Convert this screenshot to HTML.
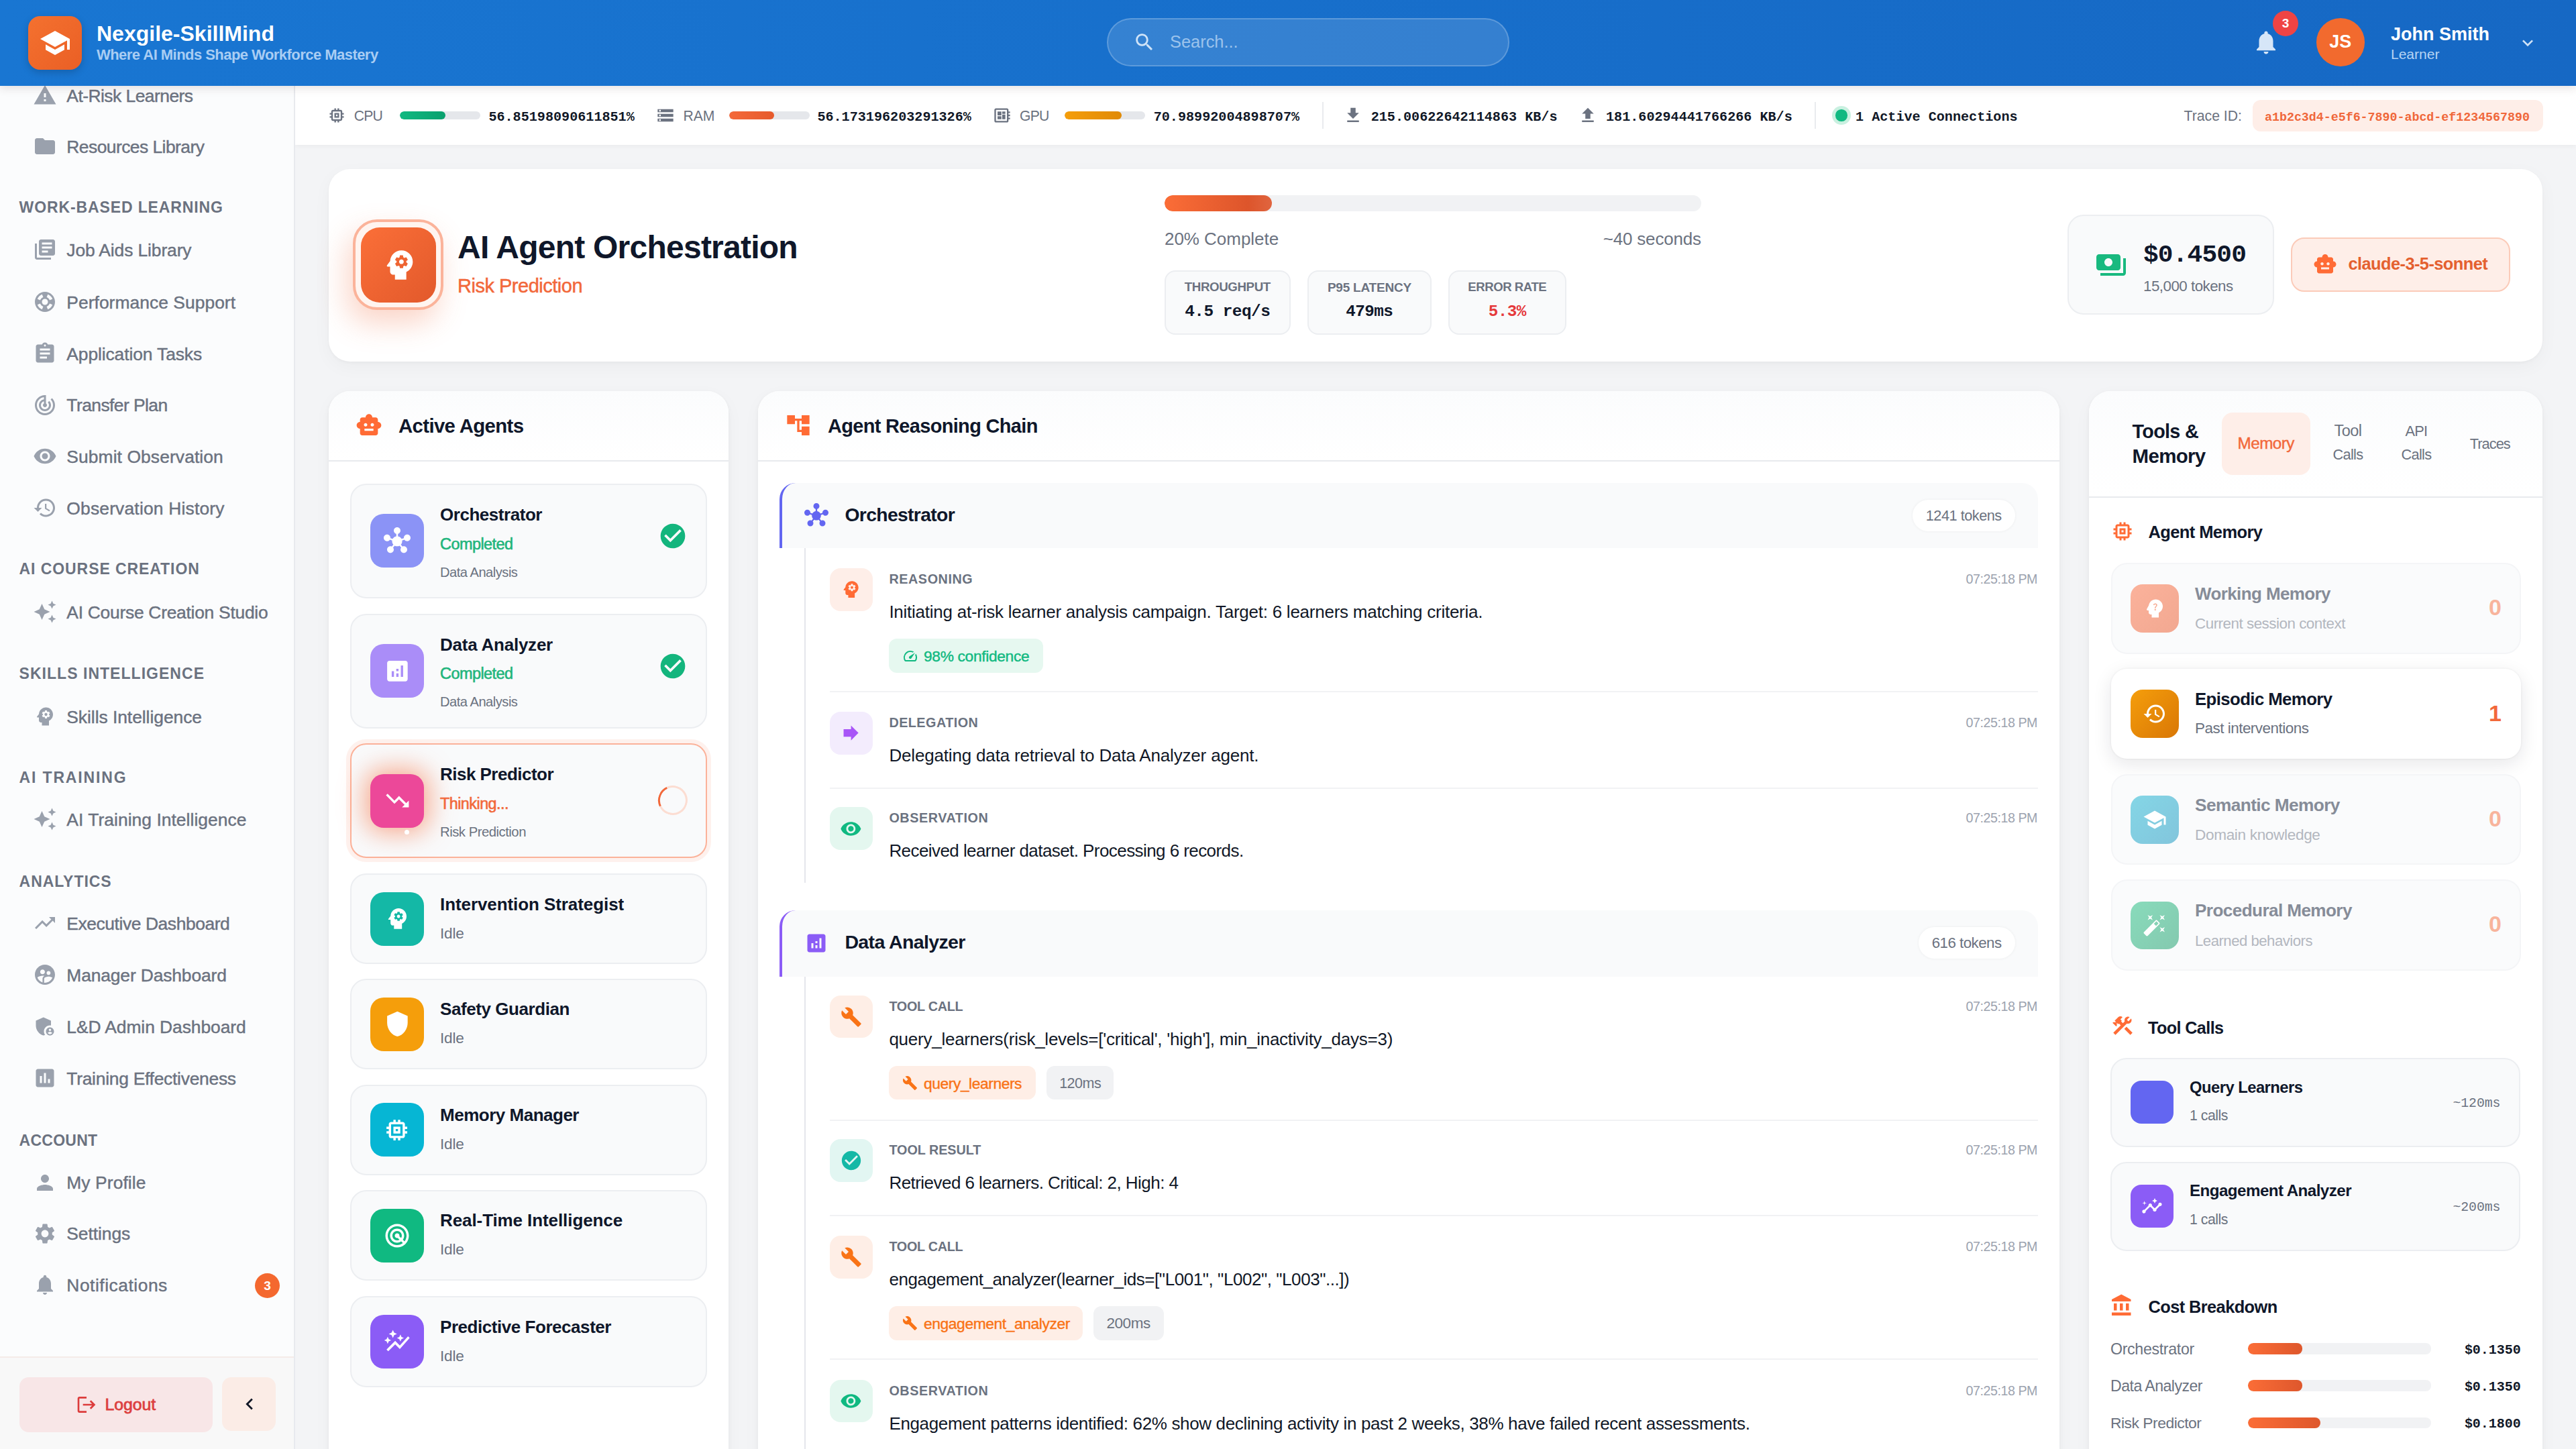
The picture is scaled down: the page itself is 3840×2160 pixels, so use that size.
<!DOCTYPE html>
<html lang="en">
<head>
<meta charset="utf-8">
<title>Nexgile-SkillMind</title>
<style>
*{box-sizing:border-box;margin:0;padding:0}
html,body{width:3840px;height:2160px;overflow:hidden;background:#f3f4f6}
body{font-family:"Liberation Sans",sans-serif;color:#0f172a}
#app{position:absolute;left:0;top:0;width:3840px;height:2160px;overflow:hidden;background:#f3f4f6}
.mono{font-family:"Liberation Mono",monospace}
svg{display:block}
.abs{position:absolute}
/* ---------- header ---------- */
#hdr{position:absolute;left:0;top:0;width:3840px;height:128px;background:linear-gradient(90deg,#1976d2 0%,#1668c4 100%);z-index:30;box-shadow:0 4px 12px rgba(70,40,40,.13)}
#logo{position:absolute;left:42px;top:24px;width:80px;height:80px;border-radius:18px;background:linear-gradient(135deg,#f4712f,#ea5f25);box-shadow:0 4px 12px rgba(0,0,0,.18)}
#logo svg{position:absolute;left:16px;top:16px;width:48px;height:48px;fill:#fff}
#brand{position:absolute;left:144px;top:30px;font-weight:700;font-size:32px;line-height:40px;color:#fff;white-space:nowrap}
#tag{position:absolute;left:144px;top:68px;font-weight:700;letter-spacing:-0.54px;font-size:22px;line-height:28px;color:#a9cdf3;white-space:nowrap}
#search{position:absolute;left:1650px;top:27px;width:600px;height:72px;border-radius:36px;background:rgba(255,255,255,.13);border:2px solid rgba(255,255,255,.2)}
#search svg{position:absolute;left:37px;top:17px;width:34px;height:34px;fill:#cfe3f8}
#search span{position:absolute;left:92px;top:15px;font-size:25.4px;line-height:36px;color:#9cc3ec}
#bell{position:absolute;left:3356.6px;top:42px;width:42px;height:42px;fill:#d6e6f8}
#bellbadge{position:absolute;left:3388px;top:16px;width:38px;height:38px;border-radius:50%;background:#ef4444;color:#fff;font-size:19px;font-weight:700;text-align:center;line-height:38px}
#avatar{position:absolute;left:3453px;top:27px;width:71.6px;height:71.6px;border-radius:50%;background:#f26a2e;color:#fff;font-weight:700;font-size:27px;text-align:center;line-height:71.6px}
#uname{position:absolute;left:3564px;top:34px;font-weight:700;font-size:27px;line-height:34px;color:#fff;white-space:nowrap}
#urole{position:absolute;left:3564px;top:68px;font-size:21px;line-height:26px;color:#b7d4f3}
#caret{position:absolute;left:3752px;top:48px;width:32px;height:32px;fill:#cfe2f7}
/* ---------- sidebar ---------- */
#side{position:absolute;left:0;top:128px;width:440px;height:2032px;background:#fbfcfd;border-right:2px solid #e8eaee;z-index:10;overflow:hidden}
.nav{position:absolute;left:0;width:438px;height:48px;color:#6b7280;font-size:26.4px;line-height:48px;white-space:nowrap}
.nav svg{position:absolute;left:49px;top:6px;width:36px;height:36px;fill:#9aa1ad}
.nav span{position:absolute;left:99px;top:0}
.sec{position:absolute;left:28px;color:#6b7280;font-size:23px;font-weight:700;letter-spacing:1px;line-height:28px;white-space:nowrap}
#sfoot{position:absolute;left:0;top:1894px;width:438px;height:138px;border-top:2px solid #f4ebe8;background:#f8f8f8}
#logout{position:absolute;left:29.2px;top:28.6px;width:287.6px;height:82px;border-radius:14px;background:#f8e6e7;color:#dc3f3f;font-weight:400;-webkit-text-stroke:0.8px #dc3f3f;font-size:24.8px;line-height:82px}
#logout svg{position:absolute;left:84px;top:25px;width:32px;height:32px;fill:#dc3c3c}
#logout span{position:absolute;left:127.2px;top:0}
#collapse{position:absolute;left:331px;top:28.6px;width:80.4px;height:80px;border-radius:14px;background:#fbece6}
#collapse svg{position:absolute;left:24px;top:23px;width:34px;height:34px;fill:#111827}
.nbadge{font-style:normal;position:absolute;left:380px;top:7px;width:37px;height:37px;border-radius:50%;background:#f4682f;color:#fff;font-size:19px;font-weight:700;text-align:center;line-height:37px}
/* ---------- status bar ---------- */
#stat{position:absolute;left:440px;top:128px;width:3400px;height:88px;background:#fff;z-index:5;box-shadow:0 2px 6px rgba(0,0,0,.04)}
#stat .ic{position:absolute;top:33px;width:23px;height:23px;fill:#6b7280}
#stat .lb{position:absolute;top:29px;font-size:21.2px;letter-spacing:-0.8px;line-height:32px;color:#6b7280}
#stat .bar{position:absolute;top:38px;width:120px;height:12px;border-radius:6px;background:#e5e7eb;overflow:hidden}
#stat .bar i{display:block;height:12px;border-radius:6px}
#stat .v{position:absolute;top:31.2px;font-size:20.14px;line-height:32px;font-weight:700;color:#111827;white-space:nowrap}
#stat .sep{position:absolute;top:24px;width:2px;height:40px;background:#e9ebee}

.t{position:absolute;white-space:nowrap}
</style>
</head>
<body>
<div id="app">

<!-- HEADER -->
<div id="hdr">
  <div id="logo"><svg viewBox="0 0 24 24"><path d="M5 13.18v4L12 21l7-3.82v-4L12 17l-7-3.82zM12 3L1 9l11 6 9-4.91V17h2V9L12 3z"/></svg></div>
  <div id="brand">Nexgile-SkillMind</div>
  <div id="tag">Where AI Minds Shape Workforce Mastery</div>
  <div id="search"><svg viewBox="0 0 24 24"><path d="M15.5 14h-.79l-.28-.27C15.41 12.59 16 11.11 16 9.5 16 5.91 13.09 3 9.5 3S3 5.91 3 9.5 5.91 16 9.5 16c1.61 0 3.09-.59 4.23-1.57l.27.28v.79l5 4.99L20.49 19l-4.99-5zm-6 0C7.01 14 5 11.99 5 9.5S7.01 5 9.5 5 14 7.01 14 9.5 11.99 14 9.5 14z"/></svg><span>Search...</span></div>
  <svg id="bell" viewBox="0 0 24 24"><path d="M12 22c1.1 0 2-.9 2-2h-4c0 1.1.89 2 2 2zm6-6v-5c0-3.07-1.64-5.64-4.5-6.32V4c0-.83-.67-1.5-1.5-1.5s-1.5.67-1.5 1.5v.68C7.63 5.36 6 7.92 6 11v5l-2 2v1h16v-1l-2-2z"/></svg>
  <div id="bellbadge">3</div>
  <div id="avatar">JS</div>
  <div id="uname">John Smith</div>
  <div id="urole">Learner</div>
  <svg id="caret" viewBox="0 0 24 24"><path d="M16.59 8.59L12 13.17 7.41 8.59 6 10l6 6 6-6z"/></svg>
</div>

<!-- SIDEBAR -->
<div id="side">
<svg viewBox="0 0 24 24" style="position:absolute;left:49px;top:-4px;width:36px;height:36px;fill:#9aa1ad;"><path d="M1 21h22L12 2 1 21zm12-3h-2v-2h2v2zm0-4h-2v-4h2v4z"/></svg>
<span class="t" style="top:1.96px;font-size:26.4px;line-height:26.4px;color:#6b7280;letter-spacing:-0.52px;left:99.3px;-webkit-text-stroke:0.44px #6b7280;">At-Risk Learners</span>
<svg viewBox="0 0 24 24" style="position:absolute;left:49px;top:72px;width:36px;height:36px;fill:#9aa1ad;"><path d="M10 4H4c-1.1 0-1.99.9-1.99 2L2 18c0 1.1.9 2 2 2h16c1.1 0 2-.9 2-2V8c0-1.1-.9-2-2-2h-8l-2-2z"/></svg>
<span class="t" style="top:77.96px;font-size:26.4px;line-height:26.4px;color:#6b7280;letter-spacing:-0.53px;left:99.3px;-webkit-text-stroke:0.44px #6b7280;">Resources Library</span>
<span class="t" style="top:169.54px;font-size:23px;line-height:23px;color:#6b7280;font-weight:700;letter-spacing:0.88px;left:28.6px;">WORK-BASED LEARNING</span>
<svg viewBox="0 0 24 24" style="position:absolute;left:49px;top:225.7px;width:36px;height:36px;fill:#9aa1ad;"><path d="M4 6H2v14c0 1.1.9 2 2 2h14v-2H4V6zm16-4H8c-1.1 0-2 .9-2 2v12c0 1.1.9 2 2 2h12c1.1 0 2-.9 2-2V4c0-1.1-.9-2-2-2zm-1 9H9V9h10v2zm-4 4H9v-2h6v2zm4-8H9V5h10v2z"/></svg>
<span class="t" style="top:231.66px;font-size:26.4px;line-height:26.4px;color:#6b7280;letter-spacing:-0.1px;left:99.3px;-webkit-text-stroke:0.44px #6b7280;">Job Aids Library</span>
<svg viewBox="0 0 24 24" style="position:absolute;left:49px;top:304px;width:36px;height:36px;fill:#9aa1ad;"><path d="M12 2C6.48 2 2 6.48 2 12s4.48 10 10 10 10-4.48 10-10S17.52 2 12 2zm7.46 7.12l-2.78 1.15c-.51-1.36-1.58-2.44-2.95-2.94l1.15-2.78c2.1.8 3.77 2.47 4.58 4.57zM12 15c-1.66 0-3-1.34-3-3s1.34-3 3-3 3 1.34 3 3-1.34 3-3 3zM9.13 4.54l1.17 2.78c-1.38.5-2.47 1.59-2.98 2.97L4.54 9.13c.81-2.11 2.48-3.78 4.59-4.59zM4.54 14.87l2.78-1.15c.51 1.38 1.59 2.46 2.97 2.96l-1.17 2.78c-2.1-.81-3.77-2.48-4.58-4.59zm10.34 4.59l-1.15-2.78c1.37-.51 2.45-1.59 2.95-2.97l2.78 1.17c-.81 2.1-2.48 3.77-4.58 4.58z"/></svg>
<span class="t" style="top:309.96px;font-size:26.4px;line-height:26.4px;color:#6b7280;letter-spacing:0.05px;left:99.3px;-webkit-text-stroke:0.44px #6b7280;">Performance Support</span>
<svg viewBox="0 0 24 24" style="position:absolute;left:49px;top:380.7px;width:36px;height:36px;fill:#9aa1ad;"><path d="M19 3h-4.18C14.4 1.84 13.3 1 12 1c-1.3 0-2.4.84-2.82 2H5c-1.1 0-2 .9-2 2v14c0 1.1.9 2 2 2h14c1.1 0 2-.9 2-2V5c0-1.1-.9-2-2-2zm-7 0c.55 0 1 .45 1 1s-.45 1-1 1-1-.45-1-1 .45-1 1-1zm2 14H7v-2h7v2zm3-4H7v-2h10v2zm0-4H7V7h10v2z"/></svg>
<span class="t" style="top:386.66px;font-size:26.4px;line-height:26.4px;color:#6b7280;letter-spacing:-0.1px;left:99.3px;-webkit-text-stroke:0.44px #6b7280;">Application Tasks</span>
<svg viewBox="0 0 24 24" style="position:absolute;left:49px;top:457.5px;width:36px;height:36px;fill:#9aa1ad;"><path d="M19.07 4.93l-1.41 1.41C19.1 7.79 20 9.79 20 12c0 4.42-3.58 8-8 8s-8-3.58-8-8c0-4.08 3.05-7.44 7-7.93v2.02C8.16 6.57 6 9.03 6 12c0 3.31 2.69 6 6 6s6-2.69 6-6c0-1.66-.67-3.16-1.76-4.24l-1.41 1.41C15.55 9.9 16 10.9 16 12c0 2.21-1.79 4-4 4s-4-1.79-4-4c0-1.86 1.28-3.41 3-3.86v2.14c-.6.35-1 .98-1 1.72 0 1.1.9 2 2 2s2-.9 2-2c0-.74-.4-1.38-1-1.72V2h-1C6.48 2 2 6.48 2 12s4.48 10 10 10 10-4.48 10-10c0-2.76-1.12-5.26-2.93-7.07z"/></svg>
<span class="t" style="top:463.46px;font-size:26.4px;line-height:26.4px;color:#6b7280;letter-spacing:-0.55px;left:99.3px;-webkit-text-stroke:0.44px #6b7280;">Transfer Plan</span>
<svg viewBox="0 0 24 24" style="position:absolute;left:49px;top:534px;width:36px;height:36px;fill:#9aa1ad;"><path d="M12 4.5C7 4.5 2.73 7.61 1 12c1.73 4.39 6 7.5 11 7.5s9.27-3.11 11-7.5c-1.73-4.39-6-7.5-11-7.5zM12 17c-2.76 0-5-2.24-5-5s2.24-5 5-5 5 2.24 5 5-2.24 5-5 5zm0-8c-1.66 0-3 1.34-3 3s1.34 3 3 3 3-1.34 3-3-1.34-3-3-3z"/></svg>
<span class="t" style="top:539.96px;font-size:26.4px;line-height:26.4px;color:#6b7280;letter-spacing:0.1px;left:99.3px;-webkit-text-stroke:0.44px #6b7280;">Submit Observation</span>
<svg viewBox="0 0 24 24" style="position:absolute;left:49px;top:611px;width:36px;height:36px;fill:#9aa1ad;"><path d="M13 3c-4.97 0-9 4.03-9 9H1l3.89 3.89.07.14L9 12H6c0-3.87 3.13-7 7-7s7 3.13 7 7-3.13 7-7 7c-1.93 0-3.68-.79-4.94-2.06l-1.42 1.42C8.27 19.99 10.51 21 13 21c4.97 0 9-4.03 9-9s-4.03-9-9-9zm-1 5v5l4.28 2.54.72-1.21-3.5-2.08V8H12z"/></svg>
<span class="t" style="top:616.96px;font-size:26.4px;line-height:26.4px;color:#6b7280;letter-spacing:0.19px;left:99.3px;-webkit-text-stroke:0.44px #6b7280;">Observation History</span>
<span class="t" style="top:708.94px;font-size:23px;line-height:23px;color:#6b7280;font-weight:700;letter-spacing:0.92px;left:28.6px;">AI COURSE CREATION</span>
<svg viewBox="0 0 24 24" style="position:absolute;left:49px;top:766px;width:36px;height:36px;fill:#9aa1ad;"><path d="M19 9l1.25-2.75L23 5l-2.75-1.25L19 1l-1.25 2.75L15 5l2.75 1.25L19 9zm-7.5.5L9 4 6.5 9.5 1 12l5.5 2.5L9 20l2.5-5.5L17 12l-5.5-2.5zM19 15l-1.25 2.75L15 19l2.75 1.25L19 23l1.25-2.75L23 19l-2.75-1.25L19 15z"/></svg>
<span class="t" style="top:771.96px;font-size:26.4px;line-height:26.4px;color:#6b7280;letter-spacing:-0.26px;left:99.3px;-webkit-text-stroke:0.44px #6b7280;">AI Course Creation Studio</span>
<span class="t" style="top:864.94px;font-size:23px;line-height:23px;color:#6b7280;font-weight:700;letter-spacing:1.03px;left:28.6px;">SKILLS INTELLIGENCE</span>
<svg viewBox="0 0 24 24" style="position:absolute;left:49px;top:922px;width:36px;height:36px;fill:#9aa1ad;"><path d="M13 8.57c-.79 0-1.43.64-1.43 1.43s.64 1.43 1.43 1.43 1.43-.64 1.43-1.43-.64-1.43-1.43-1.43z M13 3C9.25 3 6.2 5.94 6.02 9.64L4.1 12.2c-.25.33-.01.8.4.8H6v3c0 1.1.9 2 2 2h1v3h7v-4.68c2.36-1.12 4-3.53 4-6.32 0-3.87-3.13-7-7-7zm3 7c0 .13-.01.26-.02.39l.83.66c.08.06.1.16.05.25l-.8 1.39c-.05.09-.16.12-.24.09l-.99-.4c-.21.16-.43.29-.67.39L14 13.83c-.01.1-.1.17-.2.17h-1.6c-.1 0-.18-.07-.2-.17l-.15-1.06c-.25-.1-.47-.23-.68-.39l-.99.4c-.09.03-.2 0-.25-.09l-.8-1.39c-.05-.08-.03-.19.05-.25l.84-.66c-.01-.13-.02-.26-.02-.39s.02-.27.04-.39l-.85-.66c-.08-.06-.1-.16-.05-.26l.8-1.38c.05-.09.15-.12.24-.09l1 .4c.2-.15.43-.29.67-.39L12 6.17c.02-.1.1-.17.2-.17h1.6c.1 0 .18.07.2.17l.15 1.06c.24.1.46.23.67.39l1-.4c.09-.03.2 0 .24.09l.8 1.38c.05.09.03.2-.05.26l-.85.66c.03.12.04.25.04.39z"/></svg>
<span class="t" style="top:927.96px;font-size:26.4px;line-height:26.4px;color:#6b7280;letter-spacing:-0.04px;left:99.3px;-webkit-text-stroke:0.44px #6b7280;">Skills Intelligence</span>
<span class="t" style="top:1019.94px;font-size:23px;line-height:23px;color:#6b7280;font-weight:700;letter-spacing:1.84px;left:28.6px;">AI TRAINING</span>
<svg viewBox="0 0 24 24" style="position:absolute;left:49px;top:1075px;width:36px;height:36px;fill:#9aa1ad;"><path d="M19 9l1.25-2.75L23 5l-2.75-1.25L19 1l-1.25 2.75L15 5l2.75 1.25L19 9zm-7.5.5L9 4 6.5 9.5 1 12l5.5 2.5L9 20l2.5-5.5L17 12l-5.5-2.5zM19 15l-1.25 2.75L15 19l2.75 1.25L19 23l1.25-2.75L23 19l-2.75-1.25L19 15z"/></svg>
<span class="t" style="top:1080.96px;font-size:26.4px;line-height:26.4px;color:#6b7280;letter-spacing:0.05px;left:99.3px;-webkit-text-stroke:0.44px #6b7280;">AI Training Intelligence</span>
<span class="t" style="top:1174.94px;font-size:23px;line-height:23px;color:#6b7280;font-weight:700;letter-spacing:0.94px;left:28.6px;">ANALYTICS</span>
<svg viewBox="0 0 24 24" style="position:absolute;left:49px;top:1230px;width:36px;height:36px;fill:#9aa1ad;"><path d="M16 6l2.29 2.29-4.88 4.88-4-4L2 16.59 3.41 18l6-6 4 4 6.3-6.29L22 12V6z"/></svg>
<span class="t" style="top:1235.96px;font-size:26.4px;line-height:26.4px;color:#6b7280;letter-spacing:-0.41px;left:99.3px;-webkit-text-stroke:0.44px #6b7280;">Executive Dashboard</span>
<svg viewBox="0 0 24 24" style="position:absolute;left:49px;top:1307px;width:36px;height:36px;fill:#9aa1ad;"><path d="M11.99 2c-5.52 0-10 4.48-10 10s4.48 10 10 10 10-4.48 10-10-4.48-10-10-10zm3.61 6.34c1.07 0 1.93.86 1.93 1.93 0 1.07-.86 1.93-1.93 1.93-1.07 0-1.93-.86-1.93-1.93-.01-1.07.86-1.93 1.93-1.93zm-6-1.58c1.3 0 2.36 1.06 2.36 2.36 0 1.3-1.06 2.36-2.36 2.36s-2.36-1.06-2.36-2.36c0-1.31 1.05-2.36 2.36-2.36zm0 9.13v3.75c-2.4-.75-4.3-2.6-5.14-4.96 1.05-1.12 3.67-1.69 5.14-1.69.53 0 1.2.08 1.9.22-1.64.87-1.9 2.02-1.9 2.68zM11.99 20c-.27 0-.53-.01-.79-.04v-4.07c0-1.42 2.94-2.13 4.4-2.13 1.07 0 2.92.39 3.84 1.15-1.17 2.97-4.06 5.09-7.45 5.09z"/></svg>
<span class="t" style="top:1312.96px;font-size:26.4px;line-height:26.4px;color:#6b7280;letter-spacing:-0.13px;left:99.3px;-webkit-text-stroke:0.44px #6b7280;">Manager Dashboard</span>
<svg viewBox="0 0 24 24" style="position:absolute;left:49px;top:1384px;width:36px;height:36px;fill:#9aa1ad;"><path d="M17 11c.34 0 .67.04 1 .09V6.27L10.5 3 3 6.27v4.91c0 4.54 3.2 8.79 7.5 9.82.55-.13 1.08-.32 1.6-.55-.69-.98-1.1-2.17-1.1-3.45 0-3.31 2.69-6 6-6z M17 13c-2.21 0-4 1.79-4 4s1.79 4 4 4 4-1.79 4-4-1.79-4-4-4zm0 1.38c.62 0 1.12.51 1.12 1.12s-.51 1.12-1.12 1.12-1.12-.51-1.12-1.12.5-1.12 1.12-1.12zm0 5.37c-.93 0-1.74-.46-2.24-1.17.05-.72 1.51-1.08 2.24-1.08s2.19.36 2.24 1.08c-.5.71-1.31 1.17-2.24 1.17z"/></svg>
<span class="t" style="top:1389.96px;font-size:26.4px;line-height:26.4px;color:#6b7280;letter-spacing:-0.06px;left:99.3px;-webkit-text-stroke:0.44px #6b7280;">L&amp;D Admin Dashboard</span>
<svg viewBox="0 0 24 24" style="position:absolute;left:49px;top:1461px;width:36px;height:36px;fill:#9aa1ad;"><path d="M19 3H5c-1.1 0-2 .9-2 2v14c0 1.1.9 2 2 2h14c1.1 0 2-.9 2-2V5c0-1.1-.9-2-2-2zM9 17H7v-7h2v7zm4 0h-2V7h2v10zm4 0h-2v-4h2v4z"/></svg>
<span class="t" style="top:1466.96px;font-size:26.4px;line-height:26.4px;color:#6b7280;letter-spacing:-0.26px;left:99.3px;-webkit-text-stroke:0.44px #6b7280;">Training Effectiveness</span>
<span class="t" style="top:1560.94px;font-size:23px;line-height:23px;color:#6b7280;font-weight:700;letter-spacing:0.25px;left:28.6px;">ACCOUNT</span>
<svg viewBox="0 0 24 24" style="position:absolute;left:49px;top:1616.5px;width:36px;height:36px;fill:#9aa1ad;"><path d="M12 12c2.21 0 4-1.79 4-4s-1.79-4-4-4-4 1.79-4 4 1.79 4 4 4zm0 2c-2.67 0-8 1.34-8 4v2h16v-2c0-2.66-5.33-4-8-4z"/></svg>
<span class="t" style="top:1622.46px;font-size:26.4px;line-height:26.4px;color:#6b7280;letter-spacing:0.09px;left:99.3px;-webkit-text-stroke:0.44px #6b7280;">My Profile</span>
<svg viewBox="0 0 24 24" style="position:absolute;left:49px;top:1692.5px;width:36px;height:36px;fill:#9aa1ad;"><path d="M19.14 12.94c.04-.3.06-.61.06-.94 0-.32-.02-.64-.07-.94l2.03-1.58c.18-.14.23-.41.12-.61l-1.92-3.32c-.12-.22-.37-.29-.59-.22l-2.39.96c-.5-.38-1.03-.7-1.62-.94l-.36-2.54c-.04-.24-.24-.41-.48-.41h-3.84c-.24 0-.43.17-.47.41l-.36 2.54c-.59.24-1.13.57-1.62.94l-2.39-.96c-.22-.08-.47 0-.59.22L2.74 8.87c-.12.21-.08.47.12.61l2.03 1.58c-.05.3-.09.63-.09.94s.02.64.07.94l-2.03 1.58c-.18.14-.23.41-.12.61l1.92 3.32c.12.22.37.29.59.22l2.39-.96c.5.38 1.03.7 1.62.94l.36 2.54c.05.24.24.41.48.41h3.84c.24 0 .44-.17.47-.41l.36-2.54c.59-.24 1.13-.56 1.62-.94l2.39.96c.22.08.47 0 .59-.22l1.92-3.32c.12-.22.07-.47-.12-.61l-2.01-1.58zM12 15.6c-1.98 0-3.6-1.62-3.6-3.6s1.62-3.6 3.6-3.6 3.6 1.62 3.6 3.6-1.62 3.6-3.6 3.6z"/></svg>
<span class="t" style="top:1698.46px;font-size:26.4px;line-height:26.4px;color:#6b7280;letter-spacing:-0.06px;left:99.3px;-webkit-text-stroke:0.44px #6b7280;">Settings</span>
<svg viewBox="0 0 24 24" style="position:absolute;left:49px;top:1769px;width:36px;height:36px;fill:#9aa1ad;"><path d="M12 22c1.1 0 2-.9 2-2h-4c0 1.1.89 2 2 2zm6-6v-5c0-3.07-1.64-5.64-4.5-6.32V4c0-.83-.67-1.5-1.5-1.5s-1.5.67-1.5 1.5v.68C7.63 5.36 6 7.92 6 11v5l-2 2v1h16v-1l-2-2z"/></svg>
<span class="t" style="top:1774.96px;font-size:26.4px;line-height:26.4px;color:#6b7280;letter-spacing:0.52px;left:99.3px;-webkit-text-stroke:0.44px #6b7280;">Notifications</span>
<i class="nbadge" style="top:1769.5px">3</i>
<div id="sfoot"><div id="logout"><svg viewBox="0 0 24 24"><path d="M17 7l-1.41 1.41L18.17 11H8v2h10.17l-2.58 2.58L17 17l5-5zM4 5h8V3H4c-1.1 0-2 .9-2 2v14c0 1.1.9 2 2 2h8v-2H4V5z"/></svg><span>Logout</span></div><div id="collapse"><svg viewBox="0 0 24 24"><path d="M15.41 7.41L14 6l-6 6 6 6 1.41-1.41L10.83 12z"/></svg></div></div>
</div>

<!-- STATUS BAR -->
<div id="stat">
<svg class="ic" style="left:47.5px;top:30px;width:28px;height:28px" viewBox="0 0 24 24"><path d="M15 9H9v6h6V9zm-2 4h-2v-2h2v2zm8-2V9h-2V7c0-1.1-.9-2-2-2h-2V3h-2v2h-2V3H9v2H7c-1.1 0-2 .9-2 2v2H3v2h2v2H3v2h2v2c0 1.1.9 2 2 2h2v2h2v-2h2v2h2v-2h2c1.1 0 2-.9 2-2v-2h2v-2h-2v-2h2zm-4 6H7V7h10v10z"/></svg>
<span class="lb" style="left:87.7px">CPU</span>
<span class="bar" style="left:156px"><i style="width:56.8%;background:linear-gradient(90deg,#10b981,#0aa06e)"></i></span>
<span class="v mono" style="left:288.4px">56.85198090611851%</span>
<svg class="ic" style="left:537.8px;top:30px;width:28px;height:28px" viewBox="0 0 24 24"><path d="M2 20h20v-4H2v4zm2-3h2v2H4v-2zM2 4v4h20V4H2zm4 3H4V5h2v2zm-4 7h20v-4H2v4zm2-3h2v2H4v-2z"/></svg>
<span class="lb" style="left:578.6px;letter-spacing:-0.2px">RAM</span>
<span class="bar" style="left:646.7px"><i style="width:56.2%;background:linear-gradient(90deg,#f4693a,#e65a2c)"></i></span>
<span class="v mono" style="left:778.4px">56.173196203291326%</span>
<svg class="ic" style="left:1039.5px;top:30px;width:28px;height:28px" viewBox="0 0 24 24"><path d="M22 9V7h-2V5c0-1.1-.9-2-2-2H4c-1.1 0-2 .9-2 2v14c0 1.1.9 2 2 2h14c1.1 0 2-.9 2-2v-2h2v-2h-2v-2h2v-2h-2V9h2zm-4 10H4V5h14v14zM6 13h5v4H6zm6-6h4v3h-4zM6 7h5v5H6zm6 4h4v6h-4z"/></svg>
<span class="lb" style="left:1080px">GPU</span>
<span class="bar" style="left:1147px"><i style="width:71%;background:linear-gradient(90deg,#f59e0b,#e08a06)"></i></span>
<span class="v mono" style="left:1279.7px">70.98992004898707%</span>
<span class="sep" style="left:1530.6px"></span>
<svg class="ic" style="left:1562px;top:29px;width:30px;height:30px" viewBox="0 0 24 24"><path d="M19 9h-4V3H9v6H5l7 7 7-7zM5 18v2h14v-2H5z"/></svg>
<span class="v mono" style="left:1603.7px">215.00622642114863 KB/s</span>
<svg class="ic" style="left:1912.4px;top:29px;width:30px;height:30px" viewBox="0 0 24 24"><path d="M9 16h6v-6h4l-7-7-7 7h4zm-4 2h14v2H5z"/></svg>
<span class="v mono" style="left:1954px">181.60294441766266 KB/s</span>
<span class="sep" style="left:2264.6px"></span>
<span class="abs" style="left:2291px;top:30px;width:28px;height:28px;border-radius:50%;background:#c9f0e0"></span><span class="abs" style="left:2296.4px;top:35.4px;width:17.2px;height:17.2px;border-radius:50%;background:#10b981"></span>
<span class="v mono" style="left:2326px">1 Active Connections</span>
<span class="lb" style="left:2815.6px;letter-spacing:0">Trace ID:</span>
<span class="abs" style="left:2917.5px;top:21px;width:433.5px;height:47px;border-radius:12px;background:#feeee8"></span>
<span class="v mono" id="trace" style="left:2936px;color:#f0673a;font-size:18.3px">a1b2c3d4-e5f6-7890-abcd-ef1234567890</span>
</div>

<div id="main">
<div style="position:absolute;left:490px;top:252px;width:3300px;height:286.6px;background:#fff;border-radius:32px;box-shadow:0 2px 4px rgba(0,0,0,.03),0 8px 28px rgba(0,0,0,.035);"></div>
<div style="position:absolute;left:526px;top:327px;width:135px;height:135px;border-radius:36px;border:4px solid #fbb39a;background:#fff4ef;box-shadow:-8px 20px 44px rgba(242,104,58,.28);"></div>
<div style="position:absolute;left:538px;top:339px;width:112px;height:112px;border-radius:28px;background:linear-gradient(135deg,#fb6f38,#e2592b);"></div>
<svg viewBox="0 0 24 24" style="position:absolute;left:566.5px;top:365.5px;width:58px;height:58px;fill:#fff;"><path d="M13 8.57c-.79 0-1.43.64-1.43 1.43s.64 1.43 1.43 1.43 1.43-.64 1.43-1.43-.64-1.43-1.43-1.43z M13 3C9.25 3 6.2 5.94 6.02 9.64L4.1 12.2c-.25.33-.01.8.4.8H6v3c0 1.1.9 2 2 2h1v3h7v-4.68c2.36-1.12 4-3.53 4-6.32 0-3.87-3.13-7-7-7zm3 7c0 .13-.01.26-.02.39l.83.66c.08.06.1.16.05.25l-.8 1.39c-.05.09-.16.12-.24.09l-.99-.4c-.21.16-.43.29-.67.39L14 13.83c-.01.1-.1.17-.2.17h-1.6c-.1 0-.18-.07-.2-.17l-.15-1.06c-.25-.1-.47-.23-.68-.39l-.99.4c-.09.03-.2 0-.25-.09l-.8-1.39c-.05-.08-.03-.19.05-.25l.84-.66c-.01-.13-.02-.26-.02-.39s.02-.27.04-.39l-.85-.66c-.08-.06-.1-.16-.05-.26l.8-1.38c.05-.09.15-.12.24-.09l1 .4c.2-.15.43-.29.67-.39L12 6.17c.02-.1.1-.17.2-.17h1.6c.1 0 .18.07.2.17l.15 1.06c.24.1.46.23.67.39l1-.4c.09-.03.2 0 .24.09l.8 1.38c.05.09.03.2-.05.26l-.85.66c.03.12.04.25.04.39z"/></svg>
<span class="t" style="top:345.36px;font-size:48px;line-height:48px;color:#0f172a;font-weight:700;letter-spacing:-0.76px;left:682px;">AI Agent Orchestration</span>
<span class="t" style="top:412.46px;font-size:29px;line-height:29px;color:#f2683a;letter-spacing:-0.49px;left:682px;-webkit-text-stroke:0.5px #f2683a;">Risk Prediction</span>
<div style="position:absolute;left:1736px;top:291px;width:800px;height:24px;border-radius:12px;background:#f1f2f4;overflow:hidden;"><div style="width:20%;height:100%;border-radius:12px;background:linear-gradient(90deg,#fb6d37 0%,#dd552b 78%,#e0653f 100%)"></div></div>
<span class="t" style="top:343px;font-size:26px;line-height:26px;color:#6b7280;letter-spacing:-0.04px;left:1736px;">20% Complete</span>
<span class="t" style="top:343px;font-size:26px;line-height:26px;color:#6b7280;letter-spacing:-0.2px;left:2389.8px;">~40 seconds</span>
<div style="position:absolute;left:1736px;top:402.5px;width:188px;height:96px;border-radius:16px;background:#f9fafb;border:2px solid #eceef1;"></div>
<span class="t" style="top:419.14px;font-size:18.74px;line-height:18.74px;color:#6b7280;font-weight:700;letter-spacing:-0.42px;left:1765.8px;">THROUGHPUT</span>
<span class="t mono" style="top:453.26px;font-size:24.44px;line-height:24.44px;color:#0f172a;font-weight:700;letter-spacing:-0.55px;left:1766.22px;">4.5 req/s</span>
<div style="position:absolute;left:1949px;top:402.5px;width:185px;height:96px;border-radius:16px;background:#f9fafb;border:2px solid #eceef1;"></div>
<span class="t" style="top:418.92px;font-size:19px;line-height:19px;color:#6b7280;font-weight:700;letter-spacing:-0.22px;left:1978.9px;">P95 LATENCY</span>
<span class="t mono" style="top:453.4px;font-size:24.26px;line-height:24.26px;color:#0f172a;font-weight:700;letter-spacing:-0.55px;left:2006.22px;">479ms</span>
<div style="position:absolute;left:2159px;top:402.5px;width:176px;height:96px;border-radius:16px;background:#f9fafb;border:2px solid #eceef1;"></div>
<span class="t" style="top:419.3px;font-size:18.54px;line-height:18.54px;color:#6b7280;font-weight:700;letter-spacing:-0.42px;left:2188.3px;">ERROR RATE</span>
<span class="t mono" style="top:453.4px;font-size:24.26px;line-height:24.26px;color:#e5393b;font-weight:700;letter-spacing:-0.55px;left:2218.72px;">5.3%</span>
<div style="position:absolute;left:3082px;top:320px;width:308px;height:149px;border-radius:24px;background:#f9fafb;border:2px solid #eceef1;"></div>
<svg viewBox="0 0 24 24" style="position:absolute;left:3122.8px;top:370.8px;width:48px;height:48px;fill:#19b97f;"><path d="M19 14V6c0-1.1-.9-2-2-2H3c-1.1 0-2 .9-2 2v8c0 1.1.9 2 2 2h14c1.1 0 2-.9 2-2zm-9-1c-1.66 0-3-1.34-3-3s1.34-3 3-3 3 1.34 3 3-1.34 3-3 3zm13-6v11c0 1.1-.9 2-2 2H4v-2h17V7h2z"/></svg>
<span class="t mono" style="top:360.6px;font-size:37.84px;line-height:37.84px;color:#0f172a;font-weight:700;letter-spacing:-0.84px;left:3195px;">$0.4500</span>
<span class="t" style="top:416.3px;font-size:22.32px;line-height:22.32px;color:#6b7280;letter-spacing:-0.5px;left:3195px;">15,000 tokens</span>
<div style="position:absolute;left:3415px;top:354px;width:327px;height:81px;border-radius:20px;background:#feeee8;border:2px solid #fbcbb9;"></div>
<svg viewBox="0 0 24 24" style="position:absolute;left:3448px;top:376.3px;width:36px;height:36px;fill:#ff6b35;"><path d="M20 9V7c0-1.1-.9-2-2-2h-3c0-1.66-1.34-3-3-3S9 3.34 9 5H6c-1.1 0-2 .9-2 2v2c-1.66 0-3 1.34-3 3s1.34 3 3 3v4c0 1.1.9 2 2 2h12c1.1 0 2-.9 2-2v-4c1.66 0 3-1.34 3-3s-1.34-3-3-3zM7.5 11.5c0-.83.67-1.5 1.5-1.5s1.5.67 1.5 1.5S9.83 13 9 13s-1.5-.67-1.5-1.5zM16 17H8v-2h8v2zm-1-4c-.83 0-1.5-.67-1.5-1.5S14.17 10 15 10s1.5.67 1.5 1.5S15.83 13 15 13z"/></svg>
<span class="t" style="top:381.1px;font-size:25.4px;line-height:25.4px;color:#e4602f;font-weight:700;letter-spacing:-0.57px;left:3500.5px;">claude-3-5-sonnet</span>
<div style="position:absolute;left:490px;top:583px;width:596px;height:1677px;background:#fff;border-radius:32px;box-shadow:0 2px 6px rgba(0,0,0,.05),0 8px 28px rgba(0,0,0,.03);"></div>
<div style="position:absolute;left:490px;top:583px;width:596px;height:105px;border-radius:32px 32px 0 0;background:linear-gradient(180deg,#fbfcfd,#fff);border-bottom:2px solid #e8eaee;"></div>
<svg viewBox="0 0 24 24" style="position:absolute;left:529.5px;top:614.2px;width:40px;height:40px;fill:#ff6b35;"><path d="M20 9V7c0-1.1-.9-2-2-2h-3c0-1.66-1.34-3-3-3S9 3.34 9 5H6c-1.1 0-2 .9-2 2v2c-1.66 0-3 1.34-3 3s1.34 3 3 3v4c0 1.1.9 2 2 2h12c1.1 0 2-.9 2-2v-4c1.66 0 3-1.34 3-3s-1.34-3-3-3zM7.5 11.5c0-.83.67-1.5 1.5-1.5s1.5.67 1.5 1.5S9.83 13 9 13s-1.5-.67-1.5-1.5zM16 17H8v-2h8v2zm-1-4c-.83 0-1.5-.67-1.5-1.5S14.17 10 15 10s1.5.67 1.5 1.5S15.83 13 15 13z"/></svg>
<span class="t" style="top:620.1px;font-size:29.42px;line-height:29.42px;color:#0f172a;font-weight:700;letter-spacing:-0.66px;left:594px;">Active Agents</span>
<div style="position:absolute;left:522px;top:720.7px;width:532px;height:171.2px;border-radius:24px;background:#f9fafb;border:2px solid #eceef1;"></div>
<div style="position:absolute;left:552px;top:766.3px;width:80px;height:80px;border-radius:20px;background:#8b93f6;"></div>
<svg viewBox="0 0 24 24" style="position:absolute;left:572px;top:786.3px;width:40px;height:40px;fill:#fff;"><path d="M8.4 18.2c.38.5.6 1.12.6 1.8 0 1.66-1.34 3-3 3s-3-1.34-3-3 1.34-3 3-3c.44 0 .85.09 1.23.26l1.41-1.77c-.92-1.03-1.29-2.39-1.09-3.69l-2.03-.68C4.98 11.95 4.06 12.5 3 12.5c-1.66 0-3-1.34-3-3s1.34-3 3-3 3 1.34 3 3c0 .07 0 .14-.01.21l2.03.68c.64-1.21 1.82-2.09 3.22-2.32V5.91C9.96 5.57 9 4.4 9 3c0-1.66 1.34-3 3-3s3 1.34 3 3c0 1.4-.96 2.57-2.25 2.91v2.16c1.4.23 2.58 1.11 3.22 2.32l2.03-.68C18 9.64 18 9.57 18 9.5c0-1.66 1.34-3 3-3s3 1.34 3 3-1.34 3-3 3c-1.06 0-1.98-.55-2.52-1.37l-2.03.68c.2 1.29-.16 2.65-1.09 3.69l1.41 1.77c.38-.17.79-.26 1.23-.26 1.66 0 3 1.34 3 3s-1.34 3-3 3-3-1.34-3-3c0-.68.22-1.3.6-1.8l-1.41-1.77c-1.35.75-3.01.76-4.37 0L8.4 18.2z"/></svg>
<span class="t" style="top:754px;font-size:26px;line-height:26px;color:#0f172a;font-weight:700;letter-spacing:-0.46px;left:656px;">Orchestrator</span>
<span class="t" style="top:799.66px;font-size:23.44px;line-height:23.44px;color:#1fb57c;letter-spacing:-0.53px;left:656px;-webkit-text-stroke:0.6px #1fb57c;">Completed</span>
<svg viewBox="0 0 24 24" style="position:absolute;left:981px;top:777px;width:44px;height:44px;fill:#14b57d;"><path d="M12 2C6.48 2 2 6.48 2 12s4.48 10 10 10 10-4.48 10-10S17.52 2 12 2zm-2 15l-5-5 1.41-1.41L10 14.17l7.59-7.59L19 8l-9 9z"/></svg>
<span class="t" style="top:842.66px;font-size:20.14px;line-height:20.14px;color:#6b7280;letter-spacing:-0.5px;left:656px;">Data Analysis</span>
<div style="position:absolute;left:522px;top:914.5px;width:532px;height:171.2px;border-radius:24px;background:#f9fafb;border:2px solid #eceef1;"></div>
<div style="position:absolute;left:552px;top:960.1px;width:80px;height:80px;border-radius:20px;background:#aa8df8;"></div>
<svg viewBox="0 0 24 24" style="position:absolute;left:571.6px;top:979.7px;width:40.8px;height:40.8px;fill:#fff;"><path d="M19 3H5c-1.1 0-2 .9-2 2v14c0 1.1.9 2 2 2h14c1.1 0 2-.9 2-2V5c0-1.1-.9-2-2-2zM9 17H7v-5h2v5zm4 0h-2v-3h2v3zm0-5h-2v-2h2v2zm4 5h-2V7h2v10z"/></svg>
<span class="t" style="top:947.8px;font-size:26px;line-height:26px;color:#0f172a;font-weight:700;letter-spacing:-0.23px;left:656px;">Data Analyzer</span>
<span class="t" style="top:993.46px;font-size:23.44px;line-height:23.44px;color:#1fb57c;letter-spacing:-0.53px;left:656px;-webkit-text-stroke:0.6px #1fb57c;">Completed</span>
<svg viewBox="0 0 24 24" style="position:absolute;left:981px;top:970.8px;width:44px;height:44px;fill:#14b57d;"><path d="M12 2C6.48 2 2 6.48 2 12s4.48 10 10 10 10-4.48 10-10S17.52 2 12 2zm-2 15l-5-5 1.41-1.41L10 14.17l7.59-7.59L19 8l-9 9z"/></svg>
<span class="t" style="top:1036.46px;font-size:20.14px;line-height:20.14px;color:#6b7280;letter-spacing:-0.5px;left:656px;">Data Analysis</span>
<div style="position:absolute;left:522px;top:1108px;width:532px;height:171.3px;border-radius:24px;background:#f9fafb;border:2px solid #fbb29a;box-shadow:0 0 0 6px rgba(242,104,58,.09);"></div>
<div style="position:absolute;left:552px;top:1153.66px;width:80px;height:80px;border-radius:20px;background:#ec4899;box-shadow:0 0 36px 8px rgba(246,110,60,.55);"></div>
<div style="position:absolute;left:603px;top:1236.5px;width:7px;height:7px;border-radius:50%;background:#fff;"></div>
<svg viewBox="0 0 24 24" style="position:absolute;left:571.6px;top:1173.24px;width:40.8px;height:40.8px;fill:#fff;"><path d="M16 18l2.29-2.29-4.88-4.88-4 4L2 7.41 3.41 6l6 6 4-4 6.3 6.29L22 12v6z"/></svg>
<span class="t" style="top:1141.3px;font-size:26px;line-height:26px;color:#0f172a;font-weight:700;letter-spacing:-0.52px;left:656px;">Risk Predictor</span>
<span class="t" style="top:1187.02px;font-size:23.36px;line-height:23.36px;color:#f2683a;letter-spacing:-0.53px;left:656px;-webkit-text-stroke:0.6px #f2683a;">Thinking...</span>
<div style="position:absolute;left:981px;top:1170.5px;width:44px;height:43.5px;border-radius:50%;border:3.2px solid #fcddd2;border-left-color:#f2683a;transform:rotate(20deg);"></div>
<span class="t" style="top:1229.8px;font-size:20.32px;line-height:20.32px;color:#6b7280;letter-spacing:-0.5px;left:656px;">Risk Prediction</span>
<div style="position:absolute;left:522px;top:1302.4px;width:532px;height:134.8px;border-radius:24px;background:#f9fafb;border:2px solid #eceef1;"></div>
<div style="position:absolute;left:552px;top:1329.8px;width:80px;height:80px;border-radius:20px;background:#14b8a6;"></div>
<svg viewBox="0 0 24 24" style="position:absolute;left:571.6px;top:1349.4px;width:40.8px;height:40.8px;fill:#fff;"><path d="M13 8.57c-.79 0-1.43.64-1.43 1.43s.64 1.43 1.43 1.43 1.43-.64 1.43-1.43-.64-1.43-1.43-1.43z M13 3C9.25 3 6.2 5.94 6.02 9.64L4.1 12.2c-.25.33-.01.8.4.8H6v3c0 1.1.9 2 2 2h1v3h7v-4.68c2.36-1.12 4-3.53 4-6.32 0-3.87-3.13-7-7-7zm3 7c0 .13-.01.26-.02.39l.83.66c.08.06.1.16.05.25l-.8 1.39c-.05.09-.16.12-.24.09l-.99-.4c-.21.16-.43.29-.67.39L14 13.83c-.01.1-.1.17-.2.17h-1.6c-.1 0-.18-.07-.2-.17l-.15-1.06c-.25-.1-.47-.23-.68-.39l-.99.4c-.09.03-.2 0-.25-.09l-.8-1.39c-.05-.08-.03-.19.05-.25l.84-.66c-.01-.13-.02-.26-.02-.39s.02-.27.04-.39l-.85-.66c-.08-.06-.1-.16-.05-.26l.8-1.38c.05-.09.15-.12.24-.09l1 .4c.2-.15.43-.29.67-.39L12 6.17c.02-.1.1-.17.2-.17h1.6c.1 0 .18.07.2.17l.15 1.06c.24.1.46.23.67.39l1-.4c.09-.03.2 0 .24.09l.8 1.38c.05.09.03.2-.05.26l-.85.66c.03.12.04.25.04.39z"/></svg>
<span class="t" style="top:1334.6px;font-size:26px;line-height:26px;color:#0f172a;font-weight:700;letter-spacing:-0.08px;left:656px;">Intervention Strategist</span>
<span class="t" style="top:1380.66px;font-size:22.6px;line-height:22.6px;color:#6b7280;letter-spacing:-0.18px;left:656px;">Idle</span>
<div style="position:absolute;left:522px;top:1459px;width:532px;height:135.2px;border-radius:24px;background:#f9fafb;border:2px solid #eceef1;"></div>
<div style="position:absolute;left:552px;top:1486.6px;width:80px;height:80px;border-radius:20px;background:#f59e0b;"></div>
<svg viewBox="0 0 24 24" style="position:absolute;left:571.6px;top:1506.2px;width:40.8px;height:40.8px;fill:#fff;"><path d="M12 1L3 5v6c0 5.55 3.84 10.74 9 12 5.16-1.26 9-6.45 9-12V5l-9-4z"/></svg>
<span class="t" style="top:1491.2px;font-size:26px;line-height:26px;color:#0f172a;font-weight:700;letter-spacing:-0.43px;left:656px;">Safety Guardian</span>
<span class="t" style="top:1537.26px;font-size:22.6px;line-height:22.6px;color:#6b7280;letter-spacing:-0.18px;left:656px;">Idle</span>
<div style="position:absolute;left:522px;top:1616.6px;width:532px;height:135.6px;border-radius:24px;background:#f9fafb;border:2px solid #eceef1;"></div>
<div style="position:absolute;left:552px;top:1644.4px;width:80px;height:80px;border-radius:20px;background:#06b6d4;"></div>
<svg viewBox="0 0 24 24" style="position:absolute;left:571.4px;top:1663.8px;width:41.2px;height:41.2px;fill:#fff;"><path d="M15 9H9v6h6V9zm-2 4h-2v-2h2v2zm8-2V9h-2V7c0-1.1-.9-2-2-2h-2V3h-2v2h-2V3H9v2H7c-1.1 0-2 .9-2 2v2H3v2h2v2H3v2h2v2c0 1.1.9 2 2 2h2v2h2v-2h2v2h2v-2h2c1.1 0 2-.9 2-2v-2h2v-2h-2v-2h2zm-4 6H7V7h10v10z"/></svg>
<span class="t" style="top:1648.8px;font-size:26px;line-height:26px;color:#0f172a;font-weight:700;letter-spacing:-0.49px;left:656px;">Memory Manager</span>
<span class="t" style="top:1694.86px;font-size:22.6px;line-height:22.6px;color:#6b7280;letter-spacing:-0.18px;left:656px;">Idle</span>
<div style="position:absolute;left:522px;top:1774px;width:532px;height:135.4px;border-radius:24px;background:#f9fafb;border:2px solid #eceef1;"></div>
<div style="position:absolute;left:552px;top:1801.7px;width:80px;height:80px;border-radius:20px;background:#10b981;"></div>
<svg viewBox="0 0 24 24" style="position:absolute;left:571px;top:1820.7px;width:42px;height:42px;fill:#fff;"><path d="M19.74 18.33C21.15 16.6 22 14.4 22 12c0-5.52-4.48-10-10-10S2 6.48 2 12s4.48 10 10 10c2.4 0 4.6-.85 6.33-2.26.27-.22.53-.46.78-.71.03-.03.05-.06.07-.08.2-.2.39-.41.56-.62zM12 20c-4.41 0-8-3.59-8-8s3.59-8 8-8 8 3.59 8 8c0 1.85-.63 3.54-1.69 4.9l-1.43-1.43c.69-.98 1.1-2.17 1.1-3.46 0-3.31-2.69-6-6-6s-6 2.69-6 6 2.69 6 6 6c1.3 0 2.51-.42 3.49-1.13l1.42 1.42C15.54 19.37 13.85 20 12 20zm1.92-7.49c.17-.66.02-1.38-.49-1.9l-.02-.02c-.77-.77-2-.78-2.78-.04-.01.01-.03.02-.05.04-.78.78-.78 2.05 0 2.83l.02.02c.52.51 1.25.67 1.91.49l1.51 1.51c-.6.36-1.29.58-2.04.58-2.21 0-4-1.79-4-4s1.79-4 4-4 4 1.79 4 4c0 .73-.21 1.41-.56 2l-1.5-1.51z"/></svg>
<span class="t" style="top:1806.2px;font-size:26px;line-height:26px;color:#0f172a;font-weight:700;letter-spacing:-0.09px;left:656px;">Real-Time Intelligence</span>
<span class="t" style="top:1852.26px;font-size:22.6px;line-height:22.6px;color:#6b7280;letter-spacing:-0.18px;left:656px;">Idle</span>
<div style="position:absolute;left:522px;top:1932.4px;width:532px;height:135.2px;border-radius:24px;background:#f9fafb;border:2px solid #eceef1;"></div>
<div style="position:absolute;left:552px;top:1960px;width:80px;height:80px;border-radius:20px;background:#8b5cf6;"></div>
<svg viewBox="0 0 24 24" style="position:absolute;left:571.3px;top:1979.3px;width:41.4px;height:41.4px;fill:#fff;"><path d="M14.06 9.94L12 9l2.06-.94L15 6l.94 2.06L18 9l-2.06.94L15 12l-.94-2.06zM4 14l.94-2.06L7 11l-2.06-.94L4 8l-.94 2.06L1 11l2.06.94L4 14zm4.5-5l1.09-2.41L12 5.5 9.59 4.41 8.5 2 7.41 4.41 5 5.5l2.41 1.09L8.5 9zm-4 11.5l6-6.01 4 4L23 8.93l-1.41-1.41-7.09 7.97-4-4L3 19l1.5 1.5z"/></svg>
<span class="t" style="top:1964.6px;font-size:26px;line-height:26px;color:#0f172a;font-weight:700;letter-spacing:-0.45px;left:656px;">Predictive Forecaster</span>
<span class="t" style="top:2010.66px;font-size:22.6px;line-height:22.6px;color:#6b7280;letter-spacing:-0.18px;left:656px;">Idle</span>
<div style="position:absolute;left:1130px;top:583px;width:1940px;height:1677px;background:#fff;border-radius:32px;box-shadow:0 2px 6px rgba(0,0,0,.05),0 8px 28px rgba(0,0,0,.03);"></div>
<div style="position:absolute;left:1130px;top:583px;width:1940px;height:105px;border-radius:32px 32px 0 0;background:linear-gradient(180deg,#fbfcfd,#fff);border-bottom:2px solid #e8eaee;"></div>
<svg viewBox="0 0 24 24" style="position:absolute;left:1169.5px;top:614px;width:40px;height:40px;fill:#ff6b35;"><path d="M22 11V3h-7v3H9V3H2v8h7V8h2v10h4v3h7v-8h-7v3h-2V8h2v3z"/></svg>
<span class="t" style="top:621.48px;font-size:28.96px;line-height:28.96px;color:#0f172a;font-weight:700;letter-spacing:-0.66px;left:1234px;">Agent Reasoning Chain</span>
<div style="position:absolute;left:1162px;top:720.2px;width:1875.5px;height:96.5px;border-radius:24px 24px 0 0;background:#f9fafb;border-left:4px solid #6366f1;"></div>
<svg viewBox="0 0 24 24" style="position:absolute;left:1198.8px;top:749.66px;width:36px;height:36px;fill:#6366f1;"><path d="M8.4 18.2c.38.5.6 1.12.6 1.8 0 1.66-1.34 3-3 3s-3-1.34-3-3 1.34-3 3-3c.44 0 .85.09 1.23.26l1.41-1.77c-.92-1.03-1.29-2.39-1.09-3.69l-2.03-.68C4.98 11.95 4.06 12.5 3 12.5c-1.66 0-3-1.34-3-3s1.34-3 3-3 3 1.34 3 3c0 .07 0 .14-.01.21l2.03.68c.64-1.21 1.82-2.09 3.22-2.32V5.91C9.96 5.57 9 4.4 9 3c0-1.66 1.34-3 3-3s3 1.34 3 3c0 1.4-.96 2.57-2.25 2.91v2.16c1.4.23 2.58 1.11 3.22 2.32l2.03-.68C18 9.64 18 9.57 18 9.5c0-1.66 1.34-3 3-3s3 1.34 3 3-1.34 3-3 3c-1.06 0-1.98-.55-2.52-1.37l-2.03.68c.2 1.29-.16 2.65-1.09 3.69l1.41 1.77c.38-.17.79-.26 1.23-.26 1.66 0 3 1.34 3 3s-1.34 3-3 3-3-1.34-3-3c0-.68.22-1.3.6-1.8l-1.41-1.77c-1.35.75-3.01.76-4.37 0L8.4 18.2z"/></svg>
<span class="t" style="top:753.44px;font-size:28.3px;line-height:28.3px;color:#0f172a;font-weight:700;letter-spacing:-0.64px;left:1259.4px;">Orchestrator</span>
<div style="position:absolute;left:2850.7px;top:745px;width:153.6px;height:47px;border-radius:24px;background:#fff;box-shadow:0 0 4px rgba(0,0,0,.06);"></div>
<span class="t" style="top:758px;font-size:21.74px;line-height:21.74px;color:#6b7280;letter-spacing:-0.5px;left:2870.76px;">1241 tokens</span>
<div style="position:absolute;left:1162px;top:1357.2px;width:1875.5px;height:98.4px;border-radius:24px 24px 0 0;background:#f9fafb;border-left:4px solid #8b5cf6;"></div>
<svg viewBox="0 0 24 24" style="position:absolute;left:1198.8px;top:1387.6px;width:36px;height:36px;fill:#8b5cf6;"><path d="M19 3H5c-1.1 0-2 .9-2 2v14c0 1.1.9 2 2 2h14c1.1 0 2-.9 2-2V5c0-1.1-.9-2-2-2zM9 17H7v-5h2v5zm4 0h-2v-3h2v3zm0-5h-2v-2h2v2zm4 5h-2V7h2v10z"/></svg>
<span class="t" style="top:1390.22px;font-size:28.56px;line-height:28.56px;color:#0f172a;font-weight:700;letter-spacing:-0.64px;left:1259.4px;">Data Analyzer</span>
<div style="position:absolute;left:2859.5px;top:1382px;width:144.8px;height:47px;border-radius:24px;background:#fff;box-shadow:0 0 4px rgba(0,0,0,.06);"></div>
<span class="t" style="top:1394.54px;font-size:22.28px;line-height:22.28px;color:#6b7280;letter-spacing:-0.5px;left:2879.66px;">616 tokens</span>
<div style="position:absolute;left:1199px;top:816.7px;width:2.2px;height:499.5px;background:#e5e6ec;"></div>
<div style="position:absolute;left:1199px;top:1455.6px;width:2.2px;height:804.4px;background:#e5e6ec;"></div>
<div style="position:absolute;left:1237px;top:847.1px;width:63.6px;height:63.6px;border-radius:16px;background:#feeee8;"></div>
<svg viewBox="0 0 24 24" style="position:absolute;left:1252.2px;top:862.3px;width:33.2px;height:33.2px;fill:#ff6b35;"><path d="M13 8.57c-.79 0-1.43.64-1.43 1.43s.64 1.43 1.43 1.43 1.43-.64 1.43-1.43-.64-1.43-1.43-1.43z M13 3C9.25 3 6.2 5.94 6.02 9.64L4.1 12.2c-.25.33-.01.8.4.8H6v3c0 1.1.9 2 2 2h1v3h7v-4.68c2.36-1.12 4-3.53 4-6.32 0-3.87-3.13-7-7-7zm3 7c0 .13-.01.26-.02.39l.83.66c.08.06.1.16.05.25l-.8 1.39c-.05.09-.16.12-.24.09l-.99-.4c-.21.16-.43.29-.67.39L14 13.83c-.01.1-.1.17-.2.17h-1.6c-.1 0-.18-.07-.2-.17l-.15-1.06c-.25-.1-.47-.23-.68-.39l-.99.4c-.09.03-.2 0-.25-.09l-.8-1.39c-.05-.08-.03-.19.05-.25l.84-.66c-.01-.13-.02-.26-.02-.39s.02-.27.04-.39l-.85-.66c-.08-.06-.1-.16-.05-.26l.8-1.38c.05-.09.15-.12.24-.09l1 .4c.2-.15.43-.29.67-.39L12 6.17c.02-.1.1-.17.2-.17h1.6c.1 0 .18.07.2.17l.15 1.06c.24.1.46.23.67.39l1-.4c.09-.03.2 0 .24.09l.8 1.38c.05.09.03.2-.05.26l-.85.66c.03.12.04.25.04.39z"/></svg>
<span class="t" style="top:854.14px;font-size:19.8px;line-height:19.8px;color:#6b7280;font-weight:700;letter-spacing:0.57px;left:1325.4px;">REASONING</span>
<span class="t" style="top:854.24px;font-size:19.68px;line-height:19.68px;color:#9ca3af;letter-spacing:-0.47px;left:2930.62px;">07:25:18 PM</span>
<span class="t" style="top:898.9px;font-size:26px;line-height:26px;color:#111827;letter-spacing:-0.25px;left:1325.4px;">Initiating at-risk learner analysis campaign. Target: 6 learners matching criteria.</span>
<div style="position:absolute;left:1325px;top:952px;width:229.8px;height:50.7px;border-radius:12px;background:#e6f8f0;"></div>
<svg viewBox="0 0 24 24" style="position:absolute;left:1344.5px;top:965.5px;width:24px;height:24px;fill:#10b981;"><path d="M20.38 8.57l-1.23 1.85a8 8 0 0 1-.22 7.58H5.07A8 8 0 0 1 15.58 6.85l1.85-1.23A10 10 0 0 0 3.35 19a2 2 0 0 0 1.72 1h13.85a2 2 0 0 0 1.74-1 10 10 0 0 0-.27-10.44zm-9.79 6.84a2 2 0 0 0 2.83 0l5.66-8.49-8.49 5.66a2 2 0 0 0 0 2.83z"/></svg>
<span class="t" style="top:966.8px;font-size:22.8px;line-height:22.8px;color:#10b981;letter-spacing:-0.35px;left:1377px;-webkit-text-stroke:0.4px #10b981;">98% confidence</span>
<div style="position:absolute;left:1237px;top:1029.8px;width:1800.5px;height:2px;background:#f1f2f4;"></div>
<div style="position:absolute;left:1237px;top:1061.2px;width:63.6px;height:63.6px;border-radius:16px;background:#f3ecfd;"></div>
<svg viewBox="0 0 24 24" style="position:absolute;left:1252.2px;top:1076.4px;width:33.2px;height:33.2px;fill:#a855f7;"><path d="M12 8V4l8 8-8 8v-4H4V8z"/></svg>
<span class="t" style="top:1068.24px;font-size:19.8px;line-height:19.8px;color:#6b7280;font-weight:700;letter-spacing:0.47px;left:1325.4px;">DELEGATION</span>
<span class="t" style="top:1068.34px;font-size:19.68px;line-height:19.68px;color:#9ca3af;letter-spacing:-0.47px;left:2930.62px;">07:25:18 PM</span>
<span class="t" style="top:1113px;font-size:26px;line-height:26px;color:#111827;letter-spacing:-0.17px;left:1325.4px;">Delegating data retrieval to Data Analyzer agent.</span>
<div style="position:absolute;left:1237px;top:1174.3px;width:1800.5px;height:2px;background:#f1f2f4;"></div>
<div style="position:absolute;left:1237px;top:1203.1px;width:63.6px;height:63.6px;border-radius:16px;background:#e4f7ef;"></div>
<svg viewBox="0 0 24 24" style="position:absolute;left:1252.4px;top:1218.5px;width:32.8px;height:32.8px;fill:#10b981;"><path d="M12 4.5C7 4.5 2.73 7.61 1 12c1.73 4.39 6 7.5 11 7.5s9.27-3.11 11-7.5c-1.73-4.39-6-7.5-11-7.5zM12 17c-2.76 0-5-2.24-5-5s2.24-5 5-5 5 2.24 5 5-2.24 5-5 5zm0-8c-1.66 0-3 1.34-3 3s1.34 3 3 3 3-1.34 3-3-1.34-3-3-3z"/></svg>
<span class="t" style="top:1210.14px;font-size:19.8px;line-height:19.8px;color:#6b7280;font-weight:700;letter-spacing:0.56px;left:1325.4px;">OBSERVATION</span>
<span class="t" style="top:1210.24px;font-size:19.68px;line-height:19.68px;color:#9ca3af;letter-spacing:-0.47px;left:2930.62px;">07:25:18 PM</span>
<span class="t" style="top:1254.9px;font-size:26px;line-height:26px;color:#111827;letter-spacing:-0.57px;left:1325.4px;">Received learner dataset. Processing 6 records.</span>
<div style="position:absolute;left:1237px;top:1483.8px;width:63.6px;height:63.6px;border-radius:16px;background:#feeee6;"></div>
<svg viewBox="0 0 24 24" style="position:absolute;left:1252.8px;top:1499.6px;width:32px;height:32px;fill:#f97316;"><path d="M22.7 19l-9.1-9.1c.9-2.3.4-5-1.5-6.9-2-2-5-2.4-7.4-1.3L9 6 6 9 1.6 4.7C.4 7.1.9 10.1 2.9 12.1c1.9 1.9 4.6 2.4 6.9 1.5l9.1 9.1c.4.4 1 .4 1.4 0l2.3-2.3c.5-.4.5-1.1.1-1.4z"/></svg>
<span class="t" style="top:1490.84px;font-size:19.8px;line-height:19.8px;color:#6b7280;font-weight:700;letter-spacing:-0.28px;left:1325.4px;">TOOL CALL</span>
<span class="t" style="top:1490.94px;font-size:19.68px;line-height:19.68px;color:#9ca3af;letter-spacing:-0.47px;left:2930.62px;">07:25:18 PM</span>
<span class="t" style="top:1535.6px;font-size:26px;line-height:26px;color:#111827;letter-spacing:-0.25px;left:1325.4px;">query_learners(risk_levels=['critical', 'high'], min_inactivity_days=3)</span>
<div style="position:absolute;left:1325px;top:1588.7px;width:218.8px;height:50.7px;border-radius:12px;background:#feeee6;"></div>
<svg viewBox="0 0 24 24" style="position:absolute;left:1345px;top:1602.7px;width:23px;height:23px;fill:#f97316;"><path d="M22.7 19l-9.1-9.1c.9-2.3.4-5-1.5-6.9-2-2-5-2.4-7.4-1.3L9 6 6 9 1.6 4.7C.4 7.1.9 10.1 2.9 12.1c1.9 1.9 4.6 2.4 6.9 1.5l9.1 9.1c.4.4 1 .4 1.4 0l2.3-2.3c.5-.4.5-1.1.1-1.4z"/></svg>
<span class="t" style="top:1603.5px;font-size:22.8px;line-height:22.8px;color:#f97316;letter-spacing:-0.43px;left:1377px;-webkit-text-stroke:0.4px #f97316;">query_learners</span>
<div style="position:absolute;left:1559.8px;top:1588.7px;width:100.7px;height:50.7px;border-radius:12px;background:#f1f2f4;"></div>
<span class="t" style="top:1604.6px;font-size:21.5px;line-height:21.5px;color:#6b7280;letter-spacing:-0.5px;left:1579.14px;">120ms</span>
<div style="position:absolute;left:1237px;top:1668.6px;width:1800.5px;height:2px;background:#f1f2f4;"></div>
<div style="position:absolute;left:1237px;top:1698px;width:63.6px;height:63.6px;border-radius:16px;background:#e2f6f2;"></div>
<svg viewBox="0 0 24 24" style="position:absolute;left:1251.8px;top:1712.8px;width:34px;height:34px;fill:#14b8a6;"><path d="M12 2C6.48 2 2 6.48 2 12s4.48 10 10 10 10-4.48 10-10S17.52 2 12 2zm-2 15l-5-5 1.41-1.41L10 14.17l7.59-7.59L19 8l-9 9z"/></svg>
<span class="t" style="top:1705.04px;font-size:19.8px;line-height:19.8px;color:#6b7280;font-weight:700;letter-spacing:-0.04px;left:1325.4px;">TOOL RESULT</span>
<span class="t" style="top:1705.14px;font-size:19.68px;line-height:19.68px;color:#9ca3af;letter-spacing:-0.47px;left:2930.62px;">07:25:18 PM</span>
<span class="t" style="top:1749.8px;font-size:26px;line-height:26px;color:#111827;letter-spacing:-0.54px;left:1325.4px;">Retrieved 6 learners. Critical: 2, High: 4</span>
<div style="position:absolute;left:1237px;top:1810.6px;width:1800.5px;height:2px;background:#f1f2f4;"></div>
<div style="position:absolute;left:1237px;top:1842px;width:63.6px;height:63.6px;border-radius:16px;background:#feeee6;"></div>
<svg viewBox="0 0 24 24" style="position:absolute;left:1252.8px;top:1857.8px;width:32px;height:32px;fill:#f97316;"><path d="M22.7 19l-9.1-9.1c.9-2.3.4-5-1.5-6.9-2-2-5-2.4-7.4-1.3L9 6 6 9 1.6 4.7C.4 7.1.9 10.1 2.9 12.1c1.9 1.9 4.6 2.4 6.9 1.5l9.1 9.1c.4.4 1 .4 1.4 0l2.3-2.3c.5-.4.5-1.1.1-1.4z"/></svg>
<span class="t" style="top:1849.04px;font-size:19.8px;line-height:19.8px;color:#6b7280;font-weight:700;letter-spacing:-0.28px;left:1325.4px;">TOOL CALL</span>
<span class="t" style="top:1849.14px;font-size:19.68px;line-height:19.68px;color:#9ca3af;letter-spacing:-0.47px;left:2930.62px;">07:25:18 PM</span>
<span class="t" style="top:1893.8px;font-size:26px;line-height:26px;color:#111827;letter-spacing:-0.44px;left:1325.4px;">engagement_analyzer(learner_ids=[&quot;L001&quot;, &quot;L002&quot;, &quot;L003&quot;...])</span>
<div style="position:absolute;left:1325px;top:1946.9px;width:288.6px;height:50.7px;border-radius:12px;background:#feeee6;"></div>
<svg viewBox="0 0 24 24" style="position:absolute;left:1345px;top:1960.9px;width:23px;height:23px;fill:#f97316;"><path d="M22.7 19l-9.1-9.1c.9-2.3.4-5-1.5-6.9-2-2-5-2.4-7.4-1.3L9 6 6 9 1.6 4.7C.4 7.1.9 10.1 2.9 12.1c1.9 1.9 4.6 2.4 6.9 1.5l9.1 9.1c.4.4 1 .4 1.4 0l2.3-2.3c.5-.4.5-1.1.1-1.4z"/></svg>
<span class="t" style="top:1961.7px;font-size:22.8px;line-height:22.8px;color:#f97316;letter-spacing:-0.4px;left:1377px;-webkit-text-stroke:0.4px #f97316;">engagement_analyzer</span>
<div style="position:absolute;left:1629.6px;top:1946.9px;width:105px;height:50.7px;border-radius:12px;background:#f1f2f4;"></div>
<span class="t" style="top:1961.96px;font-size:22.5px;line-height:22.5px;color:#6b7280;letter-spacing:-0.5px;left:1649.6px;">200ms</span>
<div style="position:absolute;left:1237px;top:2025.4px;width:1800.5px;height:2px;background:#f1f2f4;"></div>
<div style="position:absolute;left:1237px;top:2056.8px;width:63.6px;height:63.6px;border-radius:16px;background:#e4f7ef;"></div>
<svg viewBox="0 0 24 24" style="position:absolute;left:1252.4px;top:2072.2px;width:32.8px;height:32.8px;fill:#10b981;"><path d="M12 4.5C7 4.5 2.73 7.61 1 12c1.73 4.39 6 7.5 11 7.5s9.27-3.11 11-7.5c-1.73-4.39-6-7.5-11-7.5zM12 17c-2.76 0-5-2.24-5-5s2.24-5 5-5 5 2.24 5 5-2.24 5-5 5zm0-8c-1.66 0-3 1.34-3 3s1.34 3 3 3 3-1.34 3-3-1.34-3-3-3z"/></svg>
<span class="t" style="top:2063.84px;font-size:19.8px;line-height:19.8px;color:#6b7280;font-weight:700;letter-spacing:0.56px;left:1325.4px;">OBSERVATION</span>
<span class="t" style="top:2063.94px;font-size:19.68px;line-height:19.68px;color:#9ca3af;letter-spacing:-0.47px;left:2930.62px;">07:25:18 PM</span>
<span class="t" style="top:2108.6px;font-size:26px;line-height:26px;color:#111827;letter-spacing:-0.35px;left:1325.4px;">Engagement patterns identified: 62% show declining activity in past 2 weeks, 38% have failed recent assessments.</span>
<div style="position:absolute;left:3114px;top:583px;width:676px;height:1677px;background:#fff;border-radius:32px;box-shadow:0 2px 6px rgba(0,0,0,.05),0 8px 28px rgba(0,0,0,.03);"></div>
<div style="position:absolute;left:3114px;top:583px;width:676px;height:159px;border-radius:32px 32px 0 0;background:linear-gradient(180deg,#fbfcfd,#fff);border-bottom:2px solid #e8eaee;"></div>
<span class="t" style="top:629.4px;font-size:28.7px;line-height:28.7px;color:#0f172a;font-weight:700;letter-spacing:-0.66px;left:3178.6px;">Tools &amp;</span>
<span class="t" style="top:664.66px;font-size:29.46px;line-height:29.46px;color:#0f172a;font-weight:700;letter-spacing:-0.66px;left:3178.6px;">Memory</span>
<div style="position:absolute;left:3312px;top:615px;width:132px;height:93px;border-radius:16px;background:#feeee8;"></div>
<span class="t" style="top:648.86px;font-size:24.26px;line-height:24.26px;color:#f2683a;letter-spacing:-0.55px;left:3335.58px;-webkit-text-stroke:0.4px #f2683a;">Memory</span>
<span class="t" style="top:630.78px;font-size:23.54px;line-height:23.54px;color:#6b7280;letter-spacing:-0.55px;left:3479.52px;">Tool</span>
<span class="t" style="top:667.28px;font-size:21.76px;line-height:21.76px;color:#6b7280;letter-spacing:-0.67px;left:3477.46px;">Calls</span>
<span class="t" style="top:632.28px;font-size:21.76px;line-height:21.76px;color:#6b7280;letter-spacing:-0.69px;left:3585.46px;">API</span>
<span class="t" style="top:667.28px;font-size:21.76px;line-height:21.76px;color:#6b7280;letter-spacing:-0.67px;left:3579.46px;">Calls</span>
<span class="t" style="top:650.98px;font-size:21.76px;line-height:21.76px;color:#6b7280;letter-spacing:-0.94px;left:3681.72px;">Traces</span>
<svg viewBox="0 0 24 24" style="position:absolute;left:3145.5px;top:773.8px;width:36px;height:36px;fill:#ff6b35;"><path d="M15 9H9v6h6V9zm-2 4h-2v-2h2v2zm8-2V9h-2V7c0-1.1-.9-2-2-2h-2V3h-2v2h-2V3H9v2H7c-1.1 0-2 .9-2 2v2H3v2h2v2H3v2h2v2c0 1.1.9 2 2 2h2v2h2v-2h2v2h2v-2h2c1.1 0 2-.9 2-2v-2h2v-2h-2v-2h2zm-4 6H7V7h10v10z"/></svg>
<span class="t" style="top:781.32px;font-size:25.5px;line-height:25.5px;color:#0f172a;font-weight:700;letter-spacing:-0.59px;left:3202.4px;">Agent Memory</span>
<div style="position:absolute;left:3146.6px;top:839px;width:611.2px;height:136px;border-radius:24px;background:#fafbfc;border:2px solid #f4f5f7;"></div>
<div style="position:absolute;left:3176.3px;top:871.2px;width:71.5px;height:71.6px;border-radius:18px;background:linear-gradient(135deg,#fbb29b,#f2a891);"></div>
<svg viewBox="0 0 24 24" style="position:absolute;left:3194px;top:889px;width:36px;height:36px;fill:#fff;"><path d="M19.94 9.06C19.5 5.73 16.57 3 13 3 9.47 3 6.57 5.61 6.08 9l-1.93 3.48c-.41.66.07 1.52.85 1.52h1v2c0 1.1.9 2 2 2h1v3h7v-4.68c2.62-1.25 4.35-4.08 3.94-7.26zM12.5 14c-.41 0-.74-.33-.74-.74 0-.41.33-.73.74-.73s.73.32.73.73c0 .41-.32.74-.73.74zm1.76-4.32c-.44.65-.86.85-1.09 1.27-.09.17-.13.28-.13.82h-1.06c0-.29-.04-.75.18-1.16.28-.51.83-.81 1.14-1.26.33-.47.15-1.36-.8-1.36-.62 0-.92.47-1.05.86l-.96-.4c.27-.78.97-1.45 2.01-1.45.86 0 1.45.39 1.75.88.26.42.41 1.21.01 1.8z"/></svg>
<span class="t" style="top:872px;font-size:25.98px;line-height:25.98px;color:#868c98;font-weight:700;letter-spacing:-0.59px;left:3272px;">Working Memory</span>
<span class="t" style="top:919.22px;font-size:22.42px;line-height:22.42px;color:#b3b7bf;letter-spacing:-0.5px;left:3272px;">Current session context</span>
<span class="t" style="top:888.22px;font-size:34px;line-height:34px;color:#f8b49c;font-weight:700;left:3710.08px;">0</span>
<div style="position:absolute;left:3146.6px;top:997.2px;width:611.2px;height:133.8px;border-radius:24px;background:#fff;box-shadow:0 8px 28px rgba(15,23,42,.10),0 0 0 2px rgba(0,0,0,.02);"></div>
<div style="position:absolute;left:3176.3px;top:1028.3px;width:71.5px;height:71.6px;border-radius:18px;background:linear-gradient(135deg,#f59e0b,#d97706);"></div>
<svg viewBox="0 0 24 24" style="position:absolute;left:3194px;top:1046.1px;width:36px;height:36px;fill:#fff;"><path d="M13 3c-4.97 0-9 4.03-9 9H1l3.89 3.89.07.14L9 12H6c0-3.87 3.13-7 7-7s7 3.13 7 7-3.13 7-7 7c-1.93 0-3.68-.79-4.94-2.06l-1.42 1.42C8.27 19.99 10.51 21 13 21c4.97 0 9-4.03 9-9s-4.03-9-9-9zm-1 5v5l4.28 2.54.72-1.21-3.5-2.08V8H12z"/></svg>
<span class="t" style="top:1029.58px;font-size:25.78px;line-height:25.78px;color:#0f172a;font-weight:700;letter-spacing:-0.59px;left:3272px;">Episodic Memory</span>
<span class="t" style="top:1074.98px;font-size:22.46px;line-height:22.46px;color:#6b7280;letter-spacing:-0.5px;left:3272px;">Past interventions</span>
<span class="t" style="top:1046.42px;font-size:34px;line-height:34px;color:#f2683a;font-weight:700;left:3710.08px;">1</span>
<div style="position:absolute;left:3146.6px;top:1154.2px;width:611.2px;height:135.3px;border-radius:24px;background:#fafbfc;border:2px solid #f4f5f7;"></div>
<div style="position:absolute;left:3176.3px;top:1186.04px;width:71.5px;height:71.6px;border-radius:18px;background:linear-gradient(135deg,#84d6e6,#82c5dc);"></div>
<svg viewBox="0 0 24 24" style="position:absolute;left:3194px;top:1203.84px;width:36px;height:36px;fill:#fff;"><path d="M5 13.18v4L12 21l7-3.82v-4L12 17l-7-3.82zM12 3L1 9l11 6 9-4.91V17h2V9L12 3z"/></svg>
<span class="t" style="top:1186.98px;font-size:26.26px;line-height:26.26px;color:#868c98;font-weight:700;letter-spacing:-0.59px;left:3272px;">Semantic Memory</span>
<span class="t" style="top:1234.26px;font-size:22.6px;line-height:22.6px;color:#b3b7bf;letter-spacing:-0.35px;left:3272px;">Domain knowledge</span>
<span class="t" style="top:1203.42px;font-size:34px;line-height:34px;color:#f8b49c;font-weight:700;left:3710.08px;">0</span>
<div style="position:absolute;left:3146.6px;top:1311.2px;width:611.2px;height:136.3px;border-radius:24px;background:#fafbfc;border:2px solid #f4f5f7;"></div>
<div style="position:absolute;left:3176.3px;top:1343.54px;width:71.5px;height:71.6px;border-radius:18px;background:linear-gradient(135deg,#88dbbb,#84c9af);"></div>
<svg viewBox="0 0 24 24" style="position:absolute;left:3194px;top:1361.34px;width:36px;height:36px;fill:#fff;"><path d="M7.5 5.6L10 7 8.6 4.5 10 2 7.5 3.4 5 2l1.4 2.5L5 7zm12 9.8L17 14l1.4 2.5L17 19l2.5-1.4L22 19l-1.4-2.5L22 14zM22 2l-2.5 1.4L17 2l1.4 2.5L17 7l2.5-1.4L22 7l-1.4-2.5zm-7.63 5.29c-.39-.39-1.02-.39-1.41 0L1.29 18.96c-.39.39-.39 1.02 0 1.41l2.34 2.34c.39.39 1.02.39 1.41 0L16.7 11.05c.39-.39.39-1.02 0-1.41l-2.33-2.35zm-1.03 5.49l-2.12-2.12 2.44-2.44 2.12 2.12-2.44 2.44z"/></svg>
<span class="t" style="top:1344.08px;font-size:26.14px;line-height:26.14px;color:#868c98;font-weight:700;letter-spacing:-0.59px;left:3272px;">Procedural Memory</span>
<span class="t" style="top:1391.64px;font-size:22.16px;line-height:22.16px;color:#b3b7bf;letter-spacing:-0.5px;left:3272px;">Learned behaviors</span>
<span class="t" style="top:1360.42px;font-size:34px;line-height:34px;color:#f8b49c;font-weight:700;left:3710.08px;">0</span>
<svg viewBox="0 0 24 24" style="position:absolute;left:3145.5px;top:1510.5px;width:36px;height:36px;fill:#ff6b35;"><path d="M13.78 15.17L15.9 13.05 21.9 19.05 19.78 21.17z M17.5 10c1.93 0 3.5-1.57 3.5-3.5 0-.58-.16-1.12-.41-1.6l-2.7 2.7L16.4 6.11l2.7-2.7C18.62 3.16 18.08 3 17.5 3 15.57 3 14 4.57 14 6.5c0 .41.08.8.21 1.16l-1.85 1.85-1.78-1.78.71-.71-1.41-1.41L12 3.49c-1.17-1.17-3.07-1.17-4.24 0L4.22 7.03l1.41 1.41H2.81l-.71.71 3.54 3.54.71-.71V9.15l1.41 1.41.71-.71 1.78 1.78-7.41 7.41 2.12 2.12L16.34 9.79c.36.13.75.21 1.16.21z"/></svg>
<span class="t" style="top:1519.6px;font-size:25.16px;line-height:25.16px;color:#0f172a;font-weight:700;letter-spacing:-0.59px;left:3202px;">Tool Calls</span>
<div style="position:absolute;left:3146.4px;top:1576.5px;width:611px;height:133.5px;border-radius:24px;background:#f9fafb;border:2px solid #eceef1;"></div>
<div style="position:absolute;left:3176.2px;top:1611.24px;width:63.8px;height:64px;border-radius:16px;background:#6366f1;"></div>
<span class="t" style="top:1608.52px;font-size:23.84px;line-height:23.84px;color:#0f172a;font-weight:700;letter-spacing:-0.55px;left:3264px;">Query Learners</span>
<span class="t" style="top:1653.24px;font-size:21.34px;line-height:21.34px;color:#6b7280;letter-spacing:-0.5px;left:3264px;">1 calls</span>
<span class="t mono" style="top:1635.82px;font-size:19.8px;line-height:19.8px;color:#6b7280;letter-spacing:-0.04px;left:3656.46px;">~120ms</span>
<div style="position:absolute;left:3146.4px;top:1731.6px;width:611px;height:133.4px;border-radius:24px;background:#f9fafb;border:2px solid #eceef1;"></div>
<div style="position:absolute;left:3176.2px;top:1766.3px;width:63.8px;height:64px;border-radius:16px;background:#8b5cf6;"></div>
<svg viewBox="0 0 24 24" style="position:absolute;left:3192px;top:1782.3px;width:32px;height:32px;fill:#fff;"><path d="M21 8c-1.45 0-2.26 1.44-1.93 2.51l-3.55 3.56c-.3-.09-.74-.09-1.04 0l-2.55-2.55C12.27 10.45 11.46 9 10 9c-1.45 0-2.27 1.44-1.93 2.52l-4.56 4.55C2.44 15.74 1 16.55 1 18c0 1.1.9 2 2 2 1.45 0 2.26-1.44 1.93-2.51l4.55-4.56c.3.09.74.09 1.04 0l2.55 2.55C12.73 16.55 13.54 18 15 18c1.45 0 2.27-1.44 1.93-2.52l3.56-3.55c1.07.33 2.51-.48 2.51-1.93 0-1.1-.9-2-2-2z M15 9l.94-2.07L18 6l-2.06-.93L15 3l-.92 2.07L12 6l2.08.93zM3.5 11L4 9l2-.5L4 8l-.5-2L3 8l-2 .5L3 9z"/></svg>
<span class="t" style="top:1763.34px;font-size:24.16px;line-height:24.16px;color:#0f172a;font-weight:700;letter-spacing:-0.55px;left:3264px;">Engagement Analyzer</span>
<span class="t" style="top:1808.34px;font-size:21.34px;line-height:21.34px;color:#6b7280;letter-spacing:-0.5px;left:3264px;">1 calls</span>
<span class="t mono" style="top:1790.92px;font-size:19.8px;line-height:19.8px;color:#6b7280;letter-spacing:-0.04px;left:3656.46px;">~200ms</span>
<svg viewBox="0 0 24 24" style="position:absolute;left:3144.6px;top:1928.2px;width:36px;height:36px;fill:#ff6b35;"><path d="M4 10v7h3v-7H4zm6 0v7h3v-7h-3zM2 22h19v-3H2v3zm14-12v7h3v-7h-3zm-4.5-9L2 6v2h19V6l-9.5-5z"/></svg>
<span class="t" style="top:1935.52px;font-size:25.38px;line-height:25.38px;color:#0f172a;font-weight:700;letter-spacing:-0.59px;left:3202.6px;">Cost Breakdown</span>
<span class="t" style="top:1999.56px;font-size:23.2px;line-height:23.2px;color:#6b7280;letter-spacing:-0.33px;left:3146px;">Orchestrator</span>
<div style="position:absolute;left:3350.5px;top:2002.4px;width:273.2px;height:16.2px;border-radius:8px;background:#f1f2f4;overflow:hidden;"><div style="width:29.8%;height:100%;border-radius:8px;background:linear-gradient(90deg,#fb6d37,#de572c)"></div></div>
<span class="t mono" style="top:2002.68px;font-size:20px;line-height:20px;color:#111827;font-weight:700;letter-spacing:-0.02px;left:3673.88px;">$0.1350</span>
<span class="t" style="top:2054.66px;font-size:23.08px;line-height:23.08px;color:#6b7280;letter-spacing:-0.51px;left:3146px;">Data Analyzer</span>
<div style="position:absolute;left:3350.5px;top:2057.4px;width:273.2px;height:16.2px;border-radius:8px;background:#f1f2f4;overflow:hidden;"><div style="width:29.8%;height:100%;border-radius:8px;background:linear-gradient(90deg,#fb6d37,#de572c)"></div></div>
<span class="t mono" style="top:2057.68px;font-size:20px;line-height:20px;color:#111827;font-weight:700;letter-spacing:-0.02px;left:3673.88px;">$0.1350</span>
<span class="t" style="top:2110.4px;font-size:22.92px;line-height:22.92px;color:#6b7280;letter-spacing:-0.51px;left:3146px;">Risk Predictor</span>
<div style="position:absolute;left:3350.5px;top:2113px;width:273.2px;height:16.2px;border-radius:8px;background:#f1f2f4;overflow:hidden;"><div style="width:39.8%;height:100%;border-radius:8px;background:linear-gradient(90deg,#fb6d37,#de572c)"></div></div>
<span class="t mono" style="top:2113.26px;font-size:20px;line-height:20px;color:#111827;font-weight:700;letter-spacing:-0.02px;left:3673.88px;">$0.1800</span>
</div>

</div>
</body>
</html>
